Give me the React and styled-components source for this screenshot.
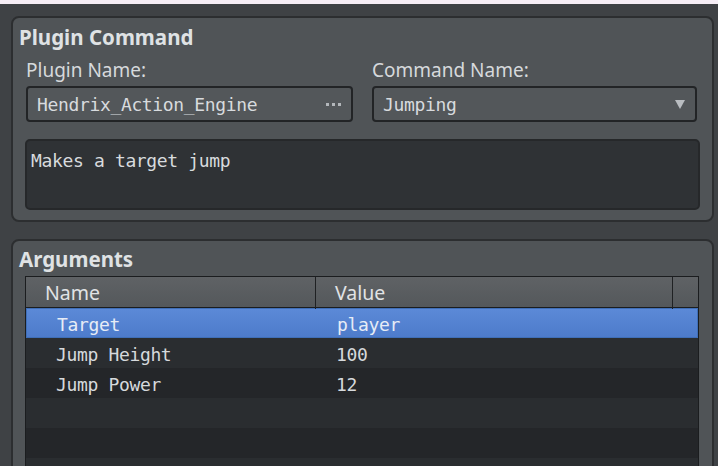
import React from 'react';
import styled, { createGlobalStyle } from 'styled-components';

const GlobalStyle = createGlobalStyle`
  html, body {
    margin: 0;
    padding: 0;
    background: #3f4245;
    overflow: hidden;
  }
`;

const TopStrip = styled.div`
  height: 4px;
  background: #f6eef6;
`;

const Page = styled.div`
  display: flex;
  flex-direction: column;
  gap: 17px;
  padding: 12px 4px 0 11px;
  height: 490px;
  box-sizing: border-box;
  font-family: 'Noto Sans', 'Open Sans', sans-serif;
  color: #d9dcdf;
`;

const Panel = styled.section`
  box-sizing: border-box;
  border: 2px solid #2c2e30;
  border-radius: 8px;
  background: #505457;
  height: ${p => p.$height || 'auto'};
  flex: ${p => (p.$grow ? '1 1 auto' : '0 0 auto')};
  min-height: 0;
  display: flex;
  flex-direction: column;
`;

const PanelTitle = styled.h2`
  margin: 0;
  padding: ${p => p.$top || 6}px 0 0 6px;
  height: 27px;
  line-height: 27px;
  font-size: 20.5px;
  font-weight: 700;
  color: #dfe2e4;
`;

const Fields = styled.div`
  display: grid;
  grid-template-columns: 327px 325px;
  column-gap: 19px;
  padding: 9px 0 0 13px;
`;

const Field = styled.div`
  display: flex;
  flex-direction: column;
  gap: 6px;
`;

const Label = styled.label`
  height: 20px;
  line-height: 20px;
  font-size: 19px;
  color: #d6d9dc;
`;

const Input = styled.div`
  box-sizing: border-box;
  height: 36px;
  border: 2px solid #222426;
  border-radius: 4px;
  background: #53575a;
  display: flex;
  align-items: center;
  padding: 1px 9px 0;
  font-family: 'DejaVu Sans Mono', monospace;
  font-size: 18px;
  letter-spacing: -0.35px;
  color: #d8dbde;
`;

const InputText = styled.span`
  flex: 1;
`;

const Dots = styled.span`
  display: flex;
  gap: 3px;
  margin-right: 1px;
  & > i {
    width: 3px;
    height: 3px;
    background: #b3b7bb;
  }
`;

const Caret = styled.span`
  width: 0;
  height: 0;
  border-left: 5px solid transparent;
  border-right: 5px solid transparent;
  border-top: 9px solid #b9bdc1;
  margin-right: 1px;
`;

const Description = styled.div`
  box-sizing: border-box;
  margin: 17px 12px 0 12px;
  height: 71px;
  border: 2px solid #26282a;
  border-radius: 5px;
  background: #2f3235;
  padding: 8px 4px;
  font-family: 'DejaVu Sans Mono', monospace;
  font-size: 18px;
  letter-spacing: -0.35px;
  line-height: 24px;
  color: #d8dbde;
`;

const Table = styled.div`
  box-sizing: border-box;
  margin: 3px 13px 0 12px;
  flex: 1;
  border: 1px solid #1b1d1f;
  border-bottom: none;
  background: #2a2d30;
  overflow: hidden;
`;

const HeaderRow = styled.div`
  display: grid;
  grid-template-columns: 290px 357px 1fr;
  height: 30px;
  background: linear-gradient(#5f6265, #54585b);
  border-bottom: 1px solid #1b1d1f;
`;

const HeaderCell = styled.div`
  padding-left: ${p => p.$pad || 0}px;
  line-height: 32px;
  font-size: 19.5px;
  color: #e1e3e5;
  border-right: ${p => (p.$last ? 'none' : '1px solid #1f2123')};
`;

const Row = styled.div`
  display: grid;
  grid-template-columns: 290px 357px 1fr;
  height: 30px;
  box-sizing: border-box;
  background: ${p =>
    p.$selected
      ? 'linear-gradient(#5b89d7, #4d7bcb)'
      : p.$odd
      ? '#2a2d30'
      : '#242629'};
  border: ${p => (p.$selected ? '1px solid #3f6fb8' : 'none')};
  font-family: 'DejaVu Sans Mono', monospace;
  font-size: 18px;
  letter-spacing: -0.35px;
  color: ${p => (p.$selected ? '#e6ecf6' : '#d6d9dc')};
`;

const Cell = styled.div`
  padding-left: ${p => p.$pad}px;
  line-height: ${p => (p.$selected ? 31 : 33)}px;
  white-space: nowrap;
`;

const args = [
  { name: 'Target', value: 'player' },
  { name: 'Jump Height', value: '100' },
  { name: 'Jump Power', value: '12' },
  { name: '', value: '' },
  { name: '', value: '' },
  { name: '', value: '' },
];

export default function App() {
  return (
    <>
      <GlobalStyle />
      <TopStrip />
      <Page>
        <Panel $height="206px">
          <PanelTitle>Plugin Command</PanelTitle>
          <Fields>
            <Field>
              <Label>Plugin Name:</Label>
              <Input>
                <InputText>Hendrix_Action_Engine</InputText>
                <Dots>
                  <i />
                  <i />
                  <i />
                </Dots>
              </Input>
            </Field>
            <Field>
              <Label>Command Name:</Label>
              <Input>
                <InputText>Jumping</InputText>
                <Caret />
              </Input>
            </Field>
          </Fields>
          <Description>Makes a target jump</Description>
        </Panel>
        <Panel $grow>
          <PanelTitle $top={5}>Arguments</PanelTitle>
          <Table>
            <HeaderRow>
              <HeaderCell $pad={19}>Name</HeaderCell>
              <HeaderCell $pad={19}>Value</HeaderCell>
              <HeaderCell $last />
            </HeaderRow>
            {args.map((a, i) => (
              <Row key={i} $selected={i === 0} $odd={i % 2 === 1}>
                <Cell $pad={30} $selected={i === 0}>{a.name}</Cell>
                <Cell $pad={20} $selected={i === 0}>{a.value}</Cell>
                <Cell />
              </Row>
            ))}
          </Table>
        </Panel>
      </Page>
    </>
  );
}
